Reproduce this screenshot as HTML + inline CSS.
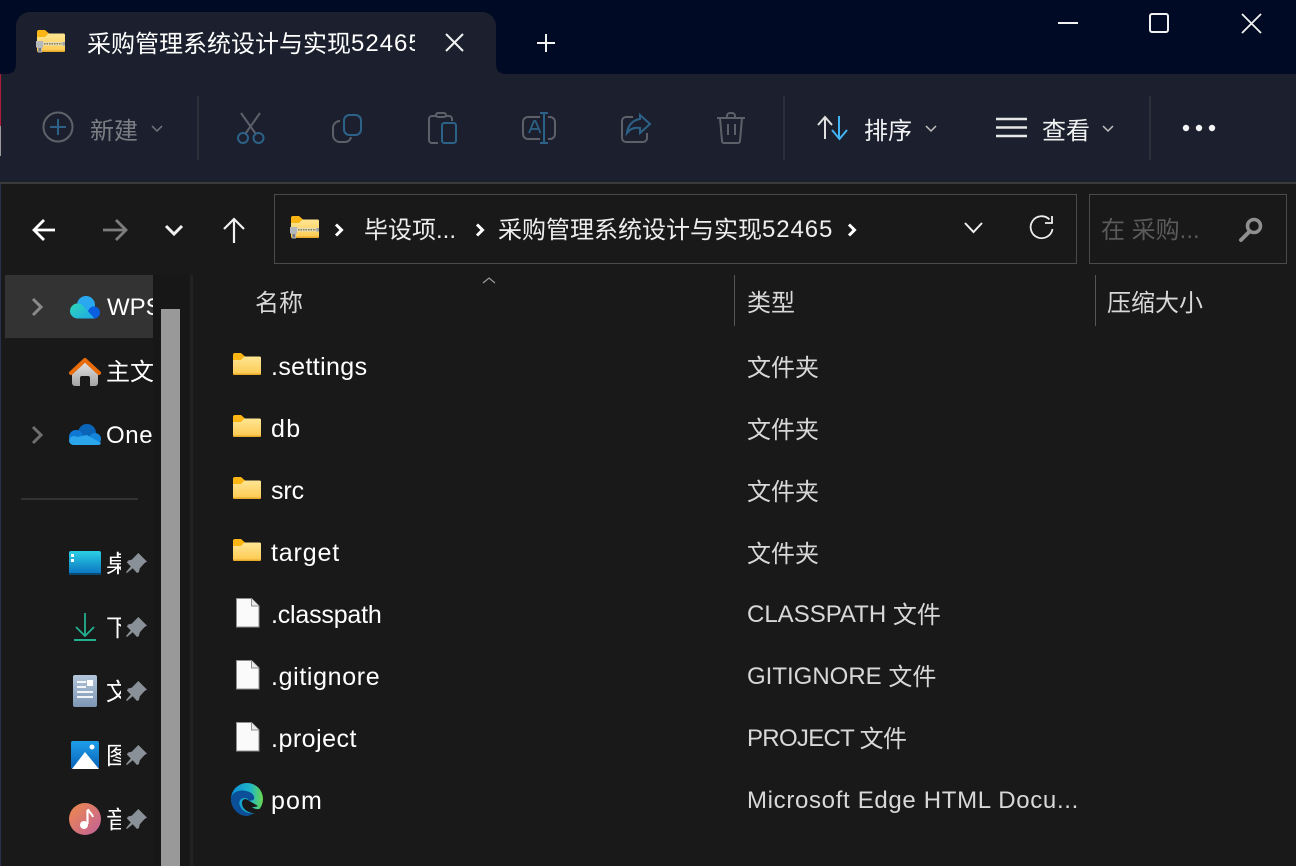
<!DOCTYPE html>
<html><head><meta charset="utf-8">
<style>
html,body{margin:0;padding:0;background:#191919}
#r{position:relative;width:1296px;height:866px;overflow:hidden;background:#191919;font-family:"Liberation Sans","Noto Sans CJK SC",sans-serif;color:#fff}
#r div{position:absolute}
.t{position:absolute;white-space:nowrap;font-size:24px;line-height:34px;height:34px;overflow:hidden}
.f{color:#fff;font-size:25px}
.k{color:#d8d8d8}
.e{position:relative;top:1px}
svg{position:absolute;left:0;top:0}
</style></head><body>
<div id="r">
<div style="left:0;top:0;width:1296px;height:74px;background:#000a24"></div>
<div style="left:0;top:74px;width:1296px;height:108px;background:#1c202e"></div>
<div style="left:16px;top:12px;width:480px;height:62px;background:#1c202e;border-radius:14px 14px 0 0"></div>
<div style="left:0;top:182px;width:1296px;height:2px;background:#3b3a3a"></div>
<div style="left:0;top:74px;width:1px;height:52px;background:#b01c38"></div>
<div style="left:0;top:126px;width:1px;height:30px;background:#999"></div>
<div style="left:0;top:184px;width:1px;height:682px;background:#26304f"></div>
<div style="left:197px;top:96px;width:2px;height:64px;background:#2c2f3a"></div>
<div style="left:783px;top:96px;width:2px;height:64px;background:#2c2f3a"></div>
<div style="left:1149px;top:96px;width:2px;height:64px;background:#2c2f3a"></div>
<div style="left:274px;top:194px;width:801px;height:68px;border:1px solid #4a4a4a"></div>
<div style="left:1089px;top:194px;width:196px;height:68px;border:1px solid #4a4a4a"></div>
<div style="left:5px;top:275px;width:148px;height:63px;background:#333"></div>
<div style="left:153px;top:275px;width:37px;height:591px;background:#171717"></div>
<div style="left:161px;top:309px;width:19px;height:557px;background:#999"></div>
<div style="left:190px;top:275px;width:3px;height:591px;background:#222"></div>
<div style="left:21px;top:498px;width:117px;height:2px;background:#333"></div>
<div style="left:734px;top:275px;width:1px;height:51px;background:#555"></div>
<div style="left:1095px;top:275px;width:1px;height:51px;background:#555"></div>

<span class="t" style="left:87px;top:27px;width:328px"><span class="e">采购管理系统设计与实现</span><span style="letter-spacing:1px">52465</span></span>
<span class="t" style="left:90px;top:115px;color:#7c7e84">新建</span>
<span class="t" style="left:864px;top:115px;color:#f2f2f2">排序</span>
<span class="t" style="left:1042px;top:115px;color:#f2f2f2">查看</span>
<span class="t" style="left:364px;top:214px;color:#eee">毕设项...</span>
<span class="t" style="left:498px;top:213px;color:#eee"><span class="e">采购管理系统设计与实现</span><span style="letter-spacing:.9px">52465</span></span>
<span class="t" style="left:1101px;top:214px;color:#5a5a5a">在 采购...</span>

<span class="t" style="left:107px;top:291px;width:46px">WPS</span>
<span class="t" style="left:106px;top:356px;width:47px">主文</span>
<span class="t" style="left:106px;top:419px;width:47px;letter-spacing:.6px">One</span>
<span class="t" style="left:106px;top:548px;width:15px">桌</span>
<span class="t" style="left:106px;top:612px;width:15px">下</span>
<span class="t" style="left:106px;top:676px;width:15px">文</span>
<span class="t" style="left:106px;top:740px;width:15px">图</span>
<span class="t" style="left:106px;top:804px;width:15px">音</span>

<span class="t k" style="left:255px;top:287px">名称</span>
<span class="t k" style="left:747px;top:287px">类型</span>
<span class="t k" style="left:1107px;top:287px">压缩大小</span>

<span class="t f" style="left:271px;top:350px;letter-spacing:.37px">.settings</span>
<span class="t f" style="left:271px;top:412px;letter-spacing:1.4px">db</span>
<span class="t f" style="left:271px;top:474px;letter-spacing:-.1px">src</span>
<span class="t f" style="left:271px;top:536px;letter-spacing:.85px">target</span>
<span class="t f" style="left:271px;top:598px;letter-spacing:-.2px">.classpath</span>
<span class="t f" style="left:271px;top:660px;letter-spacing:.64px">.gitignore</span>
<span class="t f" style="left:271px;top:722px;letter-spacing:.5px">.project</span>
<span class="t f" style="left:271px;top:784px;letter-spacing:1.1px">pom</span>

<span class="t k" style="left:747px;top:352px">文件夹</span>
<span class="t k" style="left:747px;top:414px">文件夹</span>
<span class="t k" style="left:747px;top:476px">文件夹</span>
<span class="t k" style="left:747px;top:538px">文件夹</span>
<span class="t k" style="left:747px;top:598px">CLASSPATH <span class="e">文件</span></span>
<span class="t k" style="left:747px;top:660px">GITIGNORE <span class="e">文件</span></span>
<span class="t k" style="left:747px;top:722px;letter-spacing:-.7px">PROJECT <span class="e">文件</span></span>
<span class="t k" style="left:747px;top:784px;letter-spacing:.67px">Microsoft Edge HTML Docu...</span>

<svg width="1296" height="866" viewBox="0 0 1296 866" fill="none">
<defs>
<linearGradient id="fo" x1="0" y1="0" x2="0" y2="1"><stop offset="0" stop-color="#ffe694"/><stop offset="1" stop-color="#fdc94f"/></linearGradient>
<linearGradient id="hm" x1="0" y1="0" x2="0" y2="1"><stop offset="0" stop-color="#e2e2e2"/><stop offset="1" stop-color="#a4a4a4"/></linearGradient>
<linearGradient id="dk" x1="0" y1="0" x2="0" y2="1"><stop offset="0" stop-color="#2bd0e4"/><stop offset="1" stop-color="#0a70c0"/></linearGradient>
<linearGradient id="dc" x1="0" y1="0" x2="0" y2="1"><stop offset="0" stop-color="#b3c6da"/><stop offset="1" stop-color="#7d97b4"/></linearGradient>
<linearGradient id="pc" x1="0" y1="0" x2="0" y2="1"><stop offset="0" stop-color="#1e9ee8"/><stop offset="1" stop-color="#0a62b8"/></linearGradient>
<linearGradient id="mu" x1="0" y1="0" x2="1" y2="1"><stop offset="0" stop-color="#f08a48"/><stop offset="1" stop-color="#c0609c"/></linearGradient>
<linearGradient id="eg" x1="0" y1="0" x2="1" y2="0"><stop offset="0" stop-color="#0c8ed8"/><stop offset=".6" stop-color="#1fb5c8"/><stop offset="1" stop-color="#6ad84e"/></linearGradient>
<linearGradient id="wt" x1="0" y1="0" x2="1" y2="1"><stop offset="0" stop-color="#2ed8b8"/><stop offset="1" stop-color="#1ea8e8"/></linearGradient>
<symbol id="folder" viewBox="0 0 28 22" overflow="visible">
<path d="M0 2a2 2 0 0 1 2-2h6l4 3.500V8H0z" fill="#fbb515"/>
<path d="M0 7h8l3.500-3.500h15a1.500 1.500 0 0 1 1.500 1.500v15.500a1.500 1.500 0 0 1-1.500 1.500h-25a1.500 1.500 0 0 1-1.500-1.500z" fill="url(#fo)"/>
<path d="M0 20.500h28a1.500 1.500 0 0 1-1.500 1.500h-25a1.500 1.500 0 0 1-1.500-1.500z" fill="#e8a828"/>
</symbol>
<symbol id="zip" viewBox="0 0 28 22" overflow="visible">
<use href="#folder" width="28" height="22"/>
<rect x="5" y="12" width="23" height="3.500" fill="#e4dcb8"/>
<path d="M7 13.700h18" stroke="#8a7a50" stroke-width="1.500" stroke-dasharray="1.500 1"/>
<rect x="25.500" y="12" width="2.500" height="3.500" fill="#9aa0a8"/>
<path d="M-1 11h7v6.500H5v5H1v-5H-1z" fill="#b4b8bc"/>
<rect x="1.500" y="18" width="2.500" height="3.500" fill="#777"/>
</symbol>
<symbol id="file" viewBox="0 0 24 30" overflow="visible">
<path d="M.500.500h15l7.500 7.500v21H.500z" fill="#fafafa" stroke="#8e8e8e"/>
<path d="M15.500.500V8H23" fill="#e8e8e8" stroke="#8e8e8e"/>
</symbol>
<symbol id="pin" viewBox="0 0 22 22" overflow="visible">
<path d="M13 0l9 9-2.500 1.500L14.500 16l-1 4-2 1-4.500-5-6 5-1-1 5-6-4-4 1-2 4-1 5.500-5.500z" fill="#8a9097"/>
</symbol>
</defs>

<!-- tab corners -->
<path d="M16 64Q16 74 6 74H16z" fill="#1c202e"/>
<path d="M496 64Q496 74 506 74H496z" fill="#1c202e"/>
<!-- tab -->
<use href="#zip" x="37" y="30" width="28" height="22"/>
<path d="M446 34l17 17M463 34l-17 17" stroke="#f2f2f2" stroke-width="2"/>
<path d="M537 43h18M546 34v18" stroke="#f2f2f2" stroke-width="2"/>
<!-- window controls -->
<path d="M1058 23h20" stroke="#f2f2f2" stroke-width="2"/>
<rect x="1150" y="14" width="18" height="18" rx="2" stroke="#f2f2f2" stroke-width="2"/>
<path d="M1242 14l19 19M1261 14l-19 19" stroke="#f2f2f2" stroke-width="1.800"/>

<!-- toolbar -->
<circle cx="58" cy="127" r="14.500" stroke="#5f6269" stroke-width="2"/>
<path d="M50 127h16M58 119v16" stroke="#2d6288" stroke-width="2"/>
<path d="M152 126l5 5 5-5" stroke="#74767c" stroke-width="1.500"/>
<g stroke-width="2">
<path d="M241 113l14.500 20.500M260 113l-14.500 20.500" stroke="#5d6068"/>
<circle cx="243" cy="138" r="5" stroke="#2d6288"/>
<circle cx="258.500" cy="138" r="5" stroke="#2d6288"/>
<path d="M340 121a7 7 0 0 0-7 7v7a7 7 0 0 0 7 7h5a6 6 0 0 0 6-5" stroke="#5d6068"/>
<rect x="344" y="115" width="17" height="20" rx="5.500" stroke="#2d6288"/>
<path d="M436 116h-4a3 3 0 0 0-3 3v21a3 3 0 0 0 3 3h6M446 116h3a3 3 0 0 1 3 3v2" stroke="#5d6068"/>
<rect x="436" y="113" width="10" height="4" rx="2" stroke="#5d6068"/>
<rect x="442" y="123" width="14" height="20" rx="2.500" stroke="#2d6288"/>
<path d="M540 117h-12a5 5 0 0 0-5 5v12a5 5 0 0 0 5 5h12M548 117h2a5 5 0 0 1 5 5v12a5 5 0 0 1-5 5h-2" stroke="#5d6068"/>
<path d="M540 113h8M540 143h8M544 113v30" stroke="#2d6288"/>
<path d="M529 133l5-12h1.500l5 12M531 129h8" stroke="#2d6288" stroke-width="1.700"/>
<path d="M633 117h-7a4 4 0 0 0-4 4v17a4 4 0 0 0 4 4h17a4 4 0 0 0 4-4v-5" stroke="#5d6068"/>
<path d="M640 115l10 9-10 9v-5c-6-1-10 1-13 5 1-8 6-13 13-14z" stroke="#2d6288"/>
<path d="M717 118h28M727 118v-2a3 3 0 0 1 3-3h2a3 3 0 0 1 3 3v2" stroke="#5d6068"/>
<path d="M720 118l2 23a2 2 0 0 0 2 2h14a2 2 0 0 0 2-2l2-23" stroke="#5d6068"/>
<path d="M728 124v11M735 124v11" stroke="#5d6068" stroke-width="2"/>
</g>
<path d="M818 125l7-8 7 8M825 117v22" stroke="#e0e0e0" stroke-width="2"/>
<path d="M839 116v23M832 130l7.500 9 7.500-9" stroke="#41b4f5" stroke-width="2"/>
<path d="M926 126l5 5 5-5" stroke="#c0c0c0" stroke-width="1.500"/>
<path d="M996 119h31M996 127.500h31M996 136h31" stroke="#e6e6e6" stroke-width="2.400"/>
<path d="M1103 126l5 5 5-5" stroke="#c0c0c0" stroke-width="1.500"/>
<circle cx="1186" cy="128" r="3.200" fill="#f4f4f4"/><circle cx="1199" cy="128" r="3.200" fill="#f4f4f4"/><circle cx="1212" cy="128" r="3.200" fill="#f4f4f4"/>

<!-- nav -->
<path d="M55 230H34M44 220l-10 10 10 10" stroke="#fff" stroke-width="2.800"/>
<path d="M125 230h-22M116 220l10 10-10 10" stroke="#7d7d7d" stroke-width="2.800"/>
<path d="M166 226l8 8 8-8" stroke="#f2f2f2" stroke-width="3"/>
<path d="M234 243v-24M224 229l10-10 10 10" stroke="#f2f2f2" stroke-width="2.200"/>
<use href="#zip" x="291" y="216" width="28" height="22"/>
<path d="M336 224.500l5.500 5.500-5.500 5.500" stroke="#fff" stroke-width="3"/>
<path d="M477 224.500l5.500 5.500-5.500 5.500" stroke="#fff" stroke-width="3"/>
<path d="M849 224.500l5.500 5.500-5.500 5.500" stroke="#fff" stroke-width="3"/>
<path d="M965 223l8.500 9 8.500-9" stroke="#f0f0f0" stroke-width="2"/>
<path d="M1052.500 229a11 11 0 1 1-3-9.500" stroke="#eee" stroke-width="1.800"/>
<path d="M1052 216v7h-7" stroke="#eee" stroke-width="1.800"/>
<circle cx="1254" cy="226" r="6.500" stroke="#8f8f8f" stroke-width="3.500"/>
<path d="M1249 232l-8 8" stroke="#8f8f8f" stroke-width="4" stroke-linecap="round"/>

<!-- sort arrow -->
<path d="M483 283l6-5 6 5" stroke="#9a9a9a" stroke-width="1.200"/>

<!-- sidebar -->
<path d="M33 299l8 8-8 8" stroke="#8a8a8a" stroke-width="3"/>
<path d="M33 427l8 8-8 8" stroke="#6f6f6f" stroke-width="3"/>
<!-- WPS cloud -->
<circle cx="86" cy="305" r="9" fill="#29a8f0"/>
<circle cx="94" cy="312.500" r="6" fill="#0a5fe0"/>
<path d="M82 318.500l10-12 3 0 0 12z" fill="#0a5fe0"/>
<path d="M77.500 303.500a6 6 0 0 1 5 2l12 13H77.500a7.500 7.500 0 0 1 0-15z" fill="url(#wt)"/>
<!-- home -->
<path d="M72 373l13-11 13 11v10a3 3 0 0 1-3 3h-5v-8a2 2 0 0 0-2-2h-6a2 2 0 0 0-2 2v8h-5a3 3 0 0 1-3-3z" fill="url(#hm)"/>
<path d="M71 373l14-13 14 13" stroke="#e96c0a" stroke-width="4" stroke-linejoin="round" stroke-linecap="round"/>
<!-- onedrive -->
<circle cx="87" cy="433" r="9" fill="#0a64b8"/>
<circle cx="76" cy="437" r="7" fill="#0f78d4"/>
<circle cx="95" cy="439" r="6" fill="#1585dc"/>
<path d="M69 441a5 5 0 0 1 8-4l10-2 14 8a3 3 0 0 1-3 2H73a5 5 0 0 1-4-4z" fill="#2ba6ec"/>

<rect x="69" y="551" width="32" height="24" rx="2" fill="url(#dk)"/>
<rect x="69" y="573" width="32" height="2" fill="#0a4a70"/>
<rect x="71" y="554" width="3" height="3" fill="#fff"/><rect x="71" y="559" width="3" height="3" fill="#fff"/>
<path d="M85 613v23M76 627l9 9 9-9" stroke="#23b08e" stroke-width="1.800"/>
<path d="M74 640h22" stroke="#23b08e" stroke-width="2"/>
<rect x="73" y="675" width="24" height="32" rx="2" fill="url(#dc)"/>
<path d="M77 682h9M77 687h9M77 692h16M77 697h16" stroke="#fff" stroke-width="1.800"/>
<rect x="87" y="680" width="6" height="6" fill="#fff"/>
<rect x="71" y="741" width="28" height="28" rx="2" fill="url(#pc)"/>
<circle cx="92" cy="747" r="2.500" fill="#fff"/>
<path d="M72 769l13-17 14 17z" fill="#fff"/>
<circle cx="85" cy="819" r="16" fill="url(#mu)"/>
<path d="M87.500 810v14" stroke="#fff" stroke-width="2.200"/>
<circle cx="84" cy="825" r="4" fill="#fff"/>
<path d="M88 809c1 4 4 4 5 8" stroke="#fff" stroke-width="2"/>
<use href="#pin" x="126" y="553" width="21" height="21"/>
<use href="#pin" x="126" y="617" width="21" height="21"/>
<use href="#pin" x="126" y="681" width="21" height="21"/>
<use href="#pin" x="126" y="745" width="21" height="21"/>
<use href="#pin" x="126" y="809" width="21" height="21"/>

<!-- files -->
<use href="#folder" x="233" y="353" width="28" height="22"/>
<use href="#folder" x="233" y="415" width="28" height="22"/>
<use href="#folder" x="233" y="477" width="28" height="22"/>
<use href="#folder" x="233" y="539" width="28" height="22"/>
<use href="#file" x="236" y="598" width="24" height="30"/>
<use href="#file" x="236" y="660" width="24" height="30"/>
<use href="#file" x="236" y="722" width="24" height="30"/>
<circle cx="247" cy="799" r="16" fill="url(#eg)"/>
<path d="M231 799c0-6 8-10 15-8 6 1 9 5 8 8-1 2-5 2-7 1 2 0 1-2-2-2-5 0-7 4-5 8 2 5 8 8 14 7-3 2-6 3-7 3-9 0-16-8-16-17z" fill="#0a4f98"/>
<path d="M246 799c-4 0-5 4-3 8 2 4 8 7 14 6 4-2 5-3 6-5-5 2-9 1-11-1 2 0 4 0 6-1" fill="#191919"/>
</svg>
</div>
</body></html>
